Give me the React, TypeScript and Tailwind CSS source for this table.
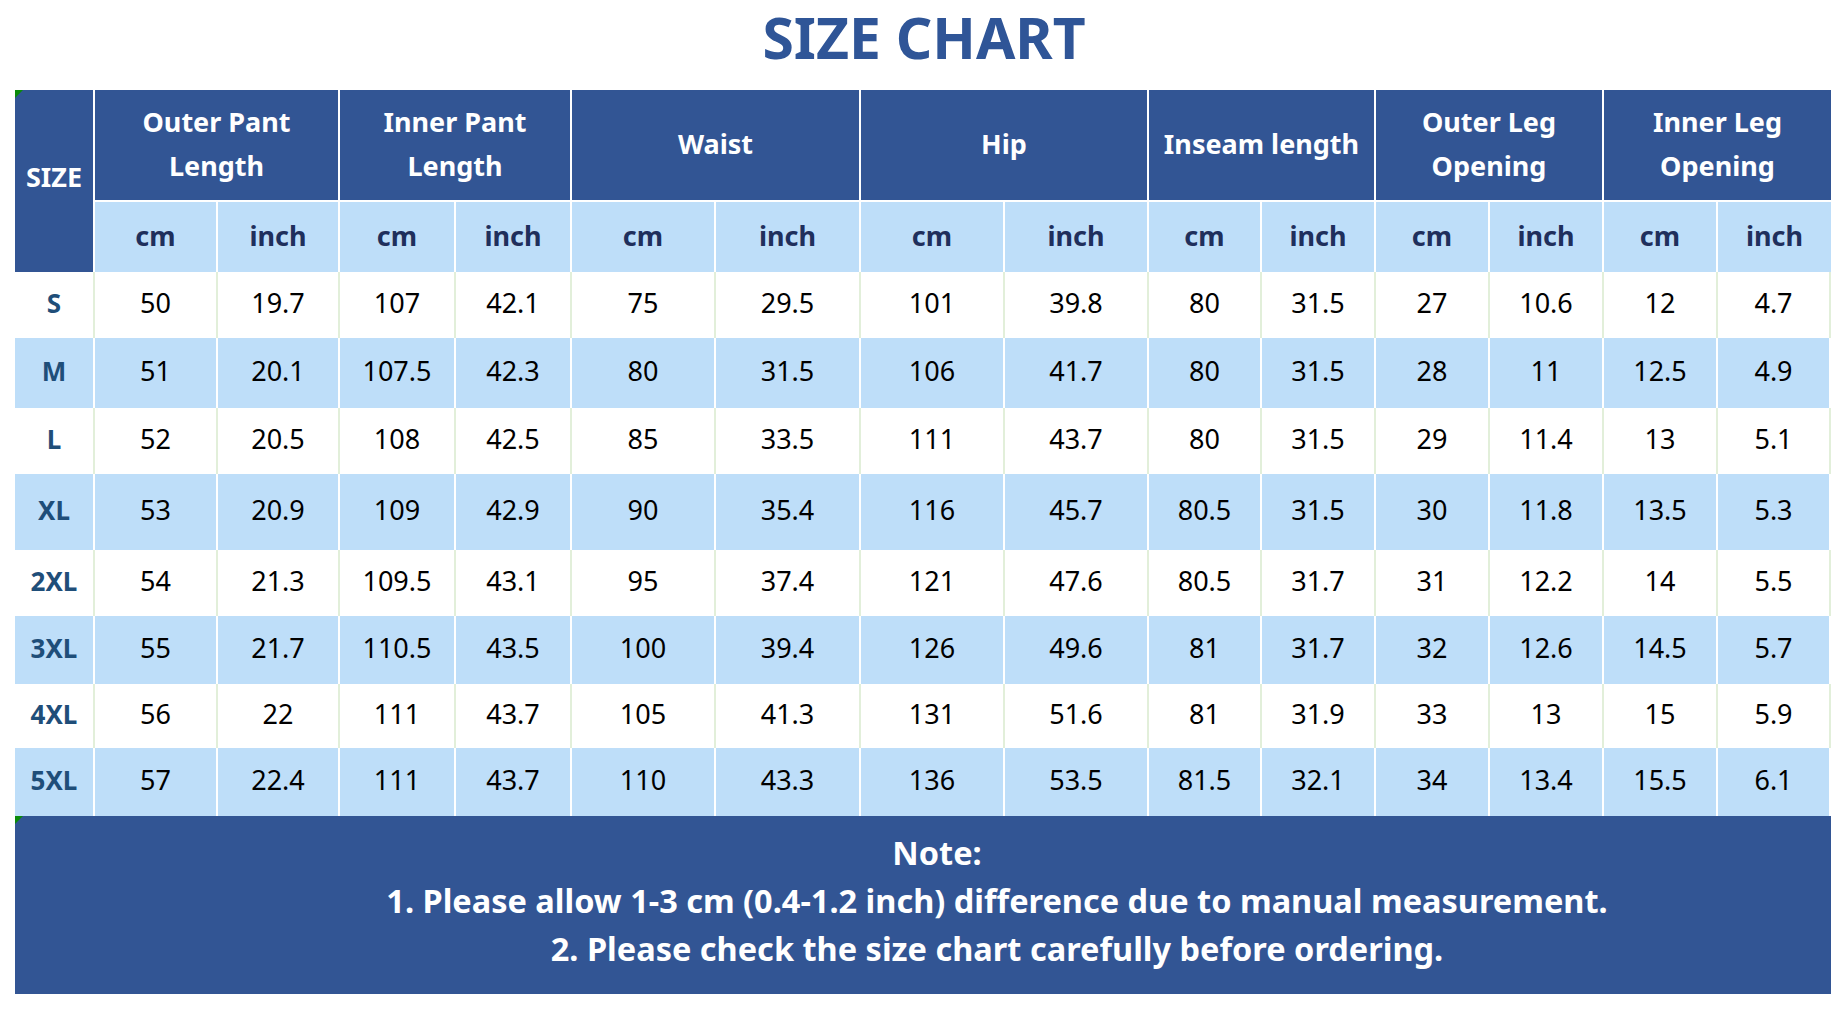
import React from 'react';

// column widths in px, SIZE first, then cm/inch pairs
const GRID =
  'grid grid-cols-[80px_123px_122px_116px_116px_144px_145px_144px_144px_113px_114px_114px_114px_114px_113px]';

const GROUPS: string[][] = [
  ['Outer Pant', 'Length'],
  ['Inner Pant', 'Length'],
  ['Waist'],
  ['Hip'],
  ['Inseam length'],
  ['Outer Leg', 'Opening'],
  ['Inner Leg', 'Opening'],
];

interface SizeRow {
  size: string;
  values: string[];
  height: string;
  blue: boolean;
}

const ROWS: SizeRow[] = [
  { size: 'S', height: 'h-[66px]', blue: false, values: ['50', '19.7', '107', '42.1', '75', '29.5', '101', '39.8', '80', '31.5', '27', '10.6', '12', '4.7'] },
  { size: 'M', height: 'h-[70px]', blue: true, values: ['51', '20.1', '107.5', '42.3', '80', '31.5', '106', '41.7', '80', '31.5', '28', '11', '12.5', '4.9'] },
  { size: 'L', height: 'h-[66px]', blue: false, values: ['52', '20.5', '108', '42.5', '85', '33.5', '111', '43.7', '80', '31.5', '29', '11.4', '13', '5.1'] },
  { size: 'XL', height: 'h-[76px]', blue: true, values: ['53', '20.9', '109', '42.9', '90', '35.4', '116', '45.7', '80.5', '31.5', '30', '11.8', '13.5', '5.3'] },
  { size: '2XL', height: 'h-[66px]', blue: false, values: ['54', '21.3', '109.5', '43.1', '95', '37.4', '121', '47.6', '80.5', '31.7', '31', '12.2', '14', '5.5'] },
  { size: '3XL', height: 'h-[68px]', blue: true, values: ['55', '21.7', '110.5', '43.5', '100', '39.4', '126', '49.6', '81', '31.7', '32', '12.6', '14.5', '5.7'] },
  { size: '4XL', height: 'h-[64px]', blue: false, values: ['56', '22', '111', '43.7', '105', '41.3', '131', '51.6', '81', '31.9', '33', '13', '15', '5.9'] },
  { size: '5XL', height: 'h-[68px]', blue: true, values: ['57', '22.4', '111', '43.7', '110', '43.3', '136', '53.5', '81.5', '32.1', '34', '13.4', '15.5', '6.1'] },
];

const Corner = () => (
  <div className="absolute left-0 top-0 h-0 w-0 border-t-[8px] border-r-[8px] border-t-[#0a8a0a] border-r-transparent" />
);

export default function App() {
  return (
    <div className="min-h-screen w-full bg-white font-['Noto_Sans',sans-serif]">
      <h1 className="flex h-[70px] items-center justify-center pt-[4px] text-[57px] leading-none font-bold text-[#2f5597]">
        SIZE CHART
      </h1>

      <div className="relative mt-[20px] ml-[15px] w-[1816px]">
        <Corner />
        {/* header */}
        <div className={GRID}>
          <div className="row-span-2 flex items-center justify-center border-r-2 border-white bg-[#325594] pb-[8px] text-[27px] font-bold text-white">
            SIZE
          </div>
          {GROUPS.map((lines, i) => (
            <div
              key={i}
              className={`col-span-2 flex h-[112px] flex-col items-center justify-center border-b-2 border-white bg-[#325594] pb-[2px] text-[27px] leading-[44px] font-bold text-white ${
                i < GROUPS.length - 1 ? 'border-r-2' : ''
              }`}
            >
              {lines.map((l) => (
                <span key={l}>{l}</span>
              ))}
            </div>
          ))}
          {GROUPS.flatMap((_, i) =>
            ['cm', 'inch'].map((u, j) => (
              <div
                key={`${i}-${u}`}
                className={`flex h-[70px] items-center justify-center border-white bg-[#bedef9] pb-[2px] text-[27px] font-bold text-[#1f2f5c] ${
                  i === GROUPS.length - 1 && j === 1 ? '' : 'border-r-2'
                }`}
              >
                {u}
              </div>
            ))
          )}
        </div>

        {/* body */}
        {ROWS.map((row) => (
          <div key={row.size} className={`${GRID} ${row.height} ${row.blue ? 'bg-[#bedef9]' : 'bg-white'}`}>
            <div
              className={`flex items-center justify-center border-r-2 pb-[3px] text-[26px] font-bold text-[#1f4e79] ${
                row.blue ? 'border-white' : 'border-[#e2efda]'
              }`}
            >
              {row.size}
            </div>
            {row.values.map((v, i) => (
              <div
                key={i}
                className={`flex items-center justify-center border-r-2 pb-[3px] text-[27px] text-black ${
                  row.blue ? 'border-white' : 'border-[#e2efda]'
                }`}
              >
                {v}
              </div>
            ))}
          </div>
        ))}

        {/* note */}
        <div className="relative h-[178px] bg-[#325594] pt-[13px] text-center text-[32.5px] leading-[48px] font-bold text-white">
          <Corner />
          <div className="pl-[28px]">Note:</div>
          <div className="pl-[148px]">1. Please allow 1-3 cm (0.4-1.2 inch) difference due to manual measurement.</div>
          <div className="pl-[148px]">2. Please check the size chart carefully before ordering.</div>
        </div>
      </div>
    </div>
  );
}
